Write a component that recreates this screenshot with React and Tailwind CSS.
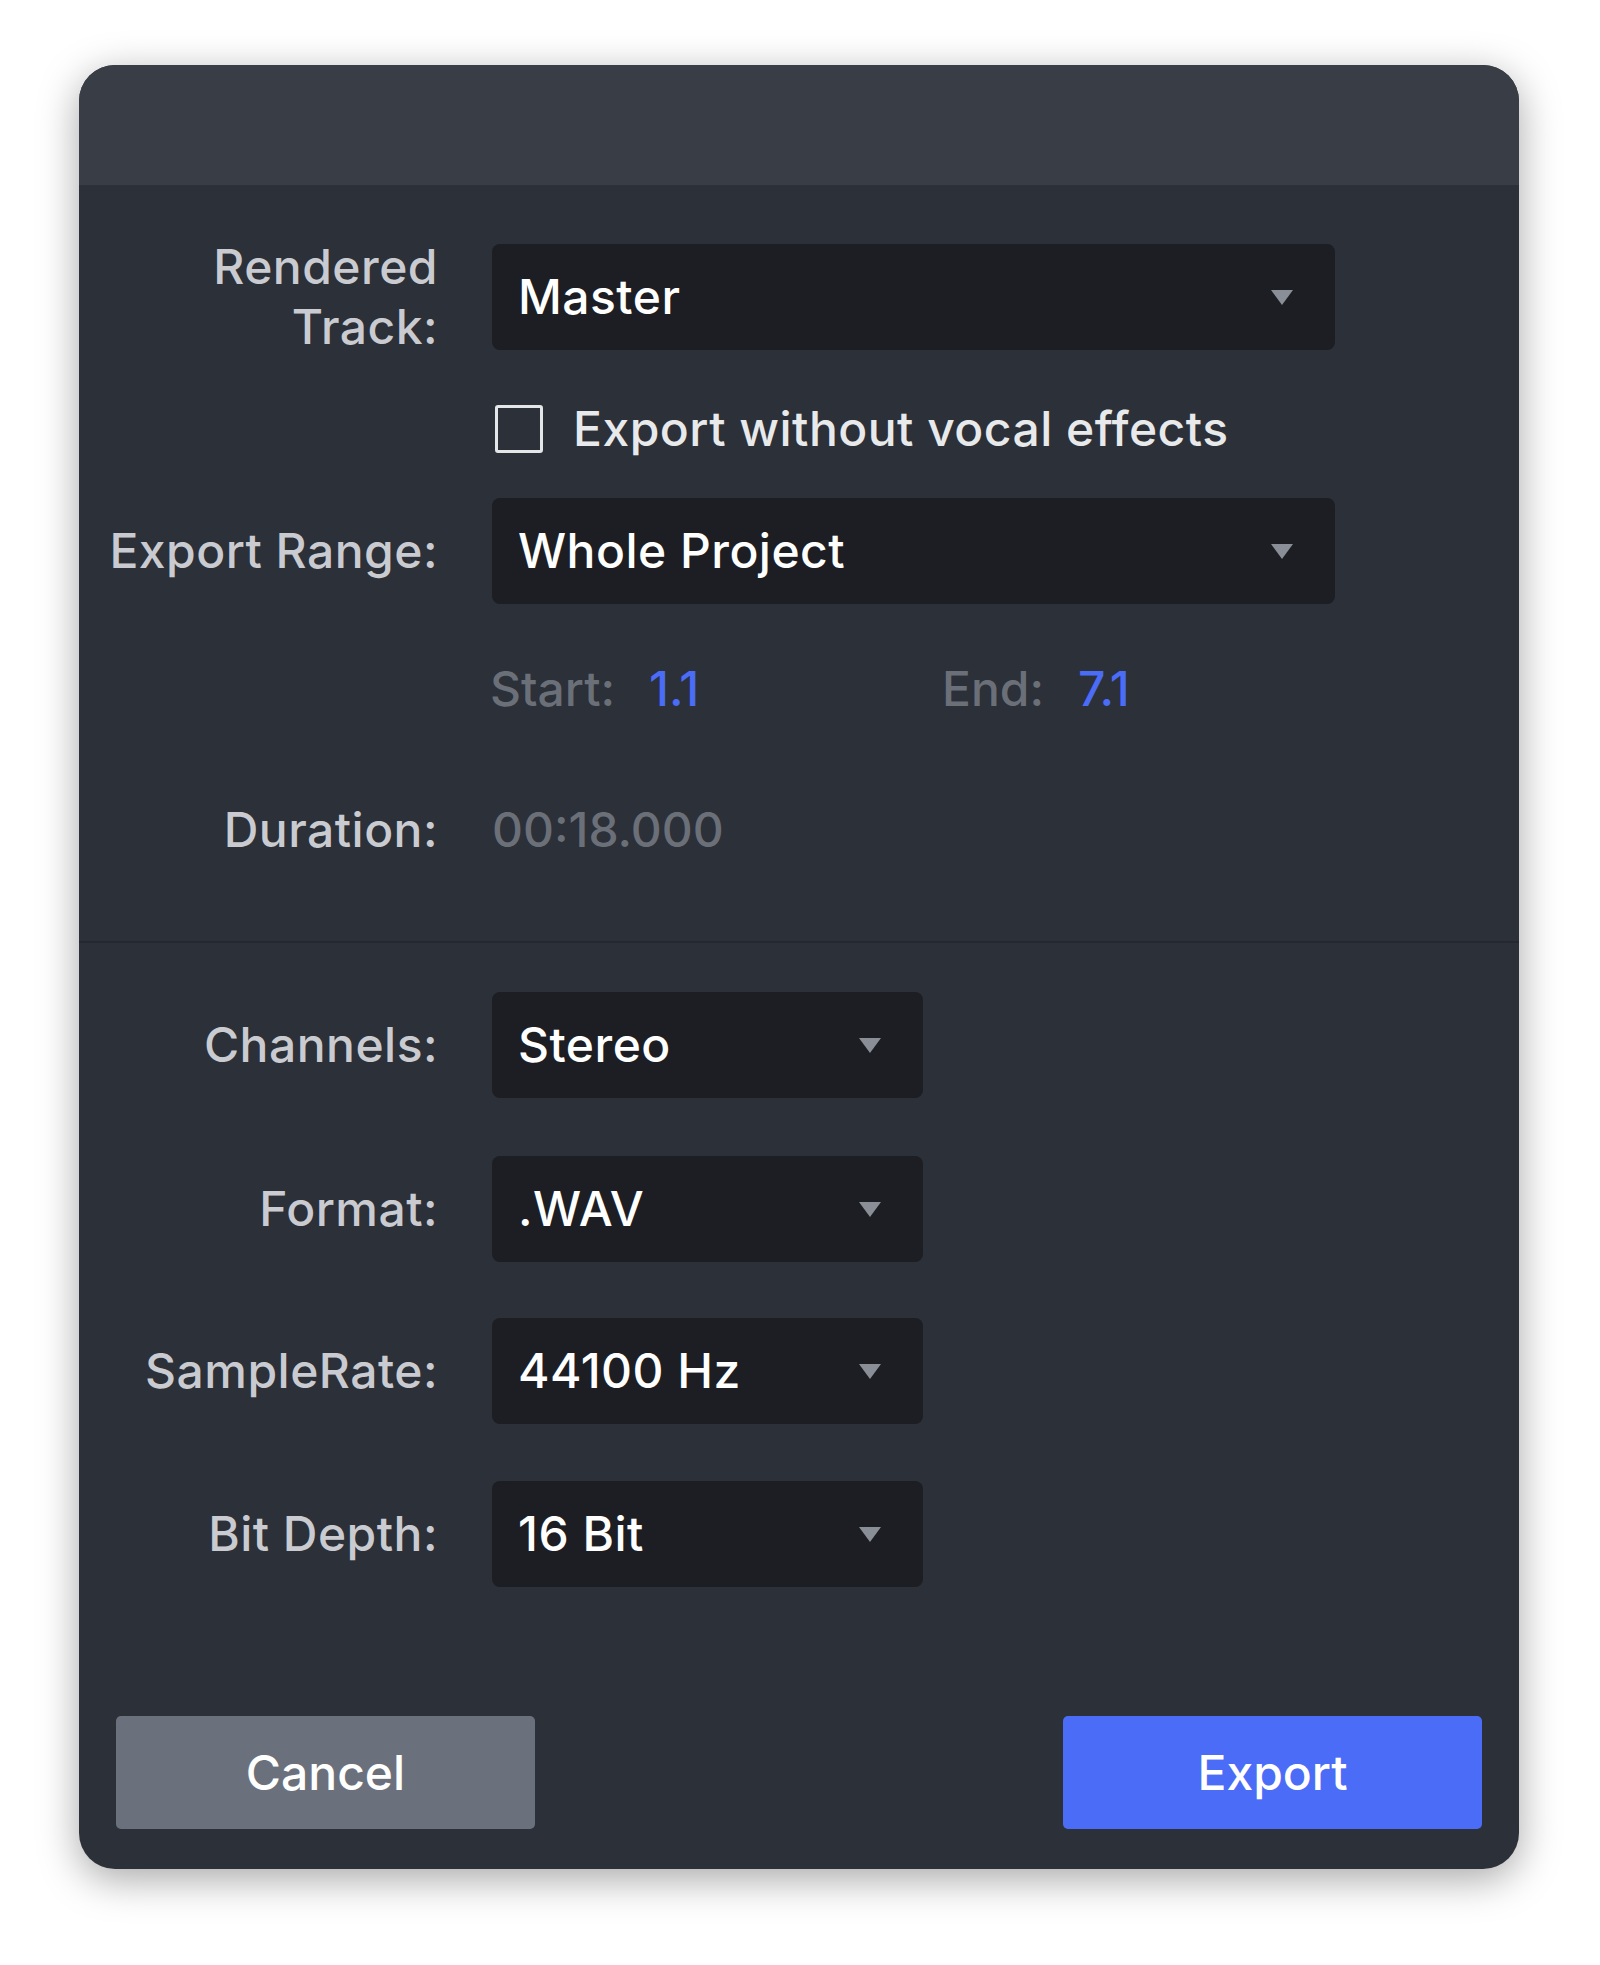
const F = { fontFamily: '"Inter","Liberation Sans",sans-serif' };

function Caret() {
  return (
    <svg width="26" height="18" viewBox="0 0 26 18"><path d="M2 2h22l-11 15z" fill="#8a8e96" /></svg>
  );
}

function Select({ value, wide }) {
  return (
    <div className={`flex h-[106px] items-center justify-between rounded-[8px] bg-[#1c1e23] pl-[26px] pr-[40px] ${wide ? 'w-[843px]' : 'w-[431px]'}`}>
      <span className="text-[48px] font-medium tracking-[0.01em] text-white">{value}</span>
      <Caret />
    </div>
  );
}

function Row({ label, children, className = '' }) {
  return (
    <div className={`flex items-center ${className}`}>
      <div className="w-[359px] text-right text-[48px] font-medium leading-[60px] tracking-[0.01em] text-[#c9cbd0]">{label}</div>
      <div className="ml-[54px]">{children}</div>
    </div>
  );
}

export default function App() {
  return (
    <div style={F} className="min-h-[1965px] w-[1600px] bg-white pt-[65px] pl-[79px]">
      <div className="flex h-[1804px] w-[1440px] flex-col overflow-hidden rounded-[36px] bg-[#2c3038] shadow-[0_10px_40px_rgba(0,0,0,0.35)]">
        <div className="h-[120px] shrink-0 bg-[#393d46]" />
        <Row label={<>Rendered<br />Track:</>} className="mt-[52px]">
          <Select value="Master" wide />
        </Row>
        <div className="ml-[416px] mt-[48px] flex h-[48px] items-center gap-[30px]">
          <div className="h-[48px] w-[48px] rounded-[3px] border-[3px] border-[#e5e6e8]" />
          <span className="text-[48px] font-medium tracking-[0.01em] text-[#e8e9eb]">Export without vocal effects</span>
        </div>
        <Row label="Export Range:" className="mt-[45px]">
          <Select value="Whole Project" wide />
        </Row>
        <div className="ml-[411px] mt-[55px] flex h-[60px] items-center text-[48px] font-medium">
          <div className="flex w-[452px] gap-[34px]"><span className="text-[#6a6f78]">Start:</span><span className="text-[#4a6cf7]">1.1</span></div>
          <div className="flex gap-[34px]"><span className="text-[#6a6f78]">End:</span><span className="text-[#4a6cf7]">7.1</span></div>
        </div>
        <Row label="Duration:" className="mt-[75px]">
          <span className="text-[48px] font-medium text-[#6a6f78]">00:18.000</span>
        </Row>
        <div className="mt-[75px] h-[2px] bg-[#252830]" />
        <Row label="Channels:" className="mt-[49px]"><Select value="Stereo" /></Row>
        <Row label="Format:" className="mt-[58px]"><Select value=".WAV" /></Row>
        <Row label="SampleRate:" className="mt-[56px]"><Select value="44100 Hz" /></Row>
        <Row label="Bit Depth:" className="mt-[57px]"><Select value="16 Bit" /></Row>
        <div className="mt-auto mb-[40px] flex justify-between px-[37px]">
          <button className="h-[113px] w-[419px] rounded-[5px] bg-[#6b717c] text-[48px] font-medium text-white">Cancel</button>
          <button className="h-[113px] w-[419px] rounded-[5px] bg-[#4a6cf7] text-[48px] font-medium text-white">Export</button>
        </div>
      </div>
    </div>
  );
}
